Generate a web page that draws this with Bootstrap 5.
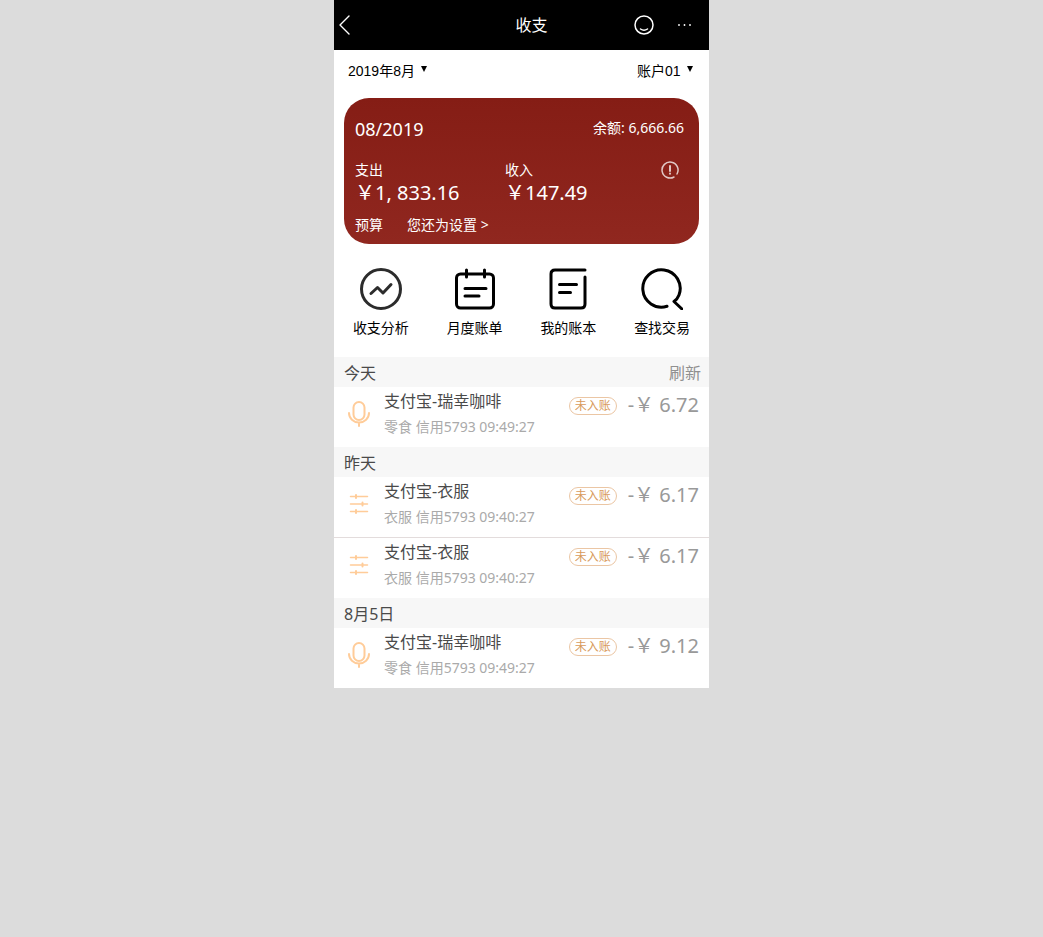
<!DOCTYPE html>
<html lang="zh-CN">
<head>
<meta charset="utf-8">
<meta name="viewport" content="width=device-width, initial-scale=1">
<title>收支</title>
<link href="https://cdn.jsdelivr.net/npm/bootstrap@5.3.0/dist/css/bootstrap.min.css" rel="stylesheet">
<style>
body{background:#dcdcdc;font-family:"Noto Sans","Noto Sans CJK SC",sans-serif;font-size:14px;line-height:20px;color:#000}
a{color:inherit;text-decoration:none}
svg{display:block;fill:none;stroke:currentColor;stroke-linecap:round;stroke-linejoin:round}
.phone{max-width:375px}
.topbar{height:50px}
.topbar h1{font-size:16px;line-height:24px;padding-left:15px}
.back{width:80px}
.actions{width:75px}
.filters{height:48px;padding:10px 16px 16px 14px;font-family:"Liberation Sans","Noto Sans CJK SC",sans-serif}
.pick{appearance:none;border:0;background:none;padding:0;color:inherit;font:inherit;line-height:20px}
.arrow{width:6px;height:6px;margin-left:6px;background:#000;clip-path:polygon(0 0,100% 0,50% 100%)}
.summary{margin:0 10px;border-radius:25px;padding:18px 15px 9px 11px;background:linear-gradient(#851d15,#90271f)}
.period{font-size:18px;line-height:26px}
.balance{line-height:24px}
.flows{padding-top:18px}
.money{font-size:20px;line-height:26px}
.flow{width:150px}
.budget{padding-top:9px}
.tools{padding-top:24px;padding-bottom:19px}
.tools svg{stroke-width:3}
.analysis{color:#2c2c2c}
.day{height:30px;padding:0 8px 0 10px;background:#f7f7f7;color:#4a4a4a}
.day h2,.day button{font-size:16px;line-height:24px;padding-top:1px}
.day button{color:#909090}
.entry{height:60px;padding:2px 10px 0 14px}
.entry + .entry{height:61px;border-top:1px solid #e3dcdc}
.ico{width:36px;padding-top:11px;color:#fc9}
.name{font-size:16px;line-height:25px;color:#4a4a4a}
.meta{line-height:25px;color:#aaa}
.state{border:1px solid #ebc6a4;border-radius:9px;font-size:12px;line-height:16px;padding:0 5px;color:#d89a5b;margin-top:8px;margin-right:11px}
.amount{font-size:20px;line-height:32px;color:#999}
</style>
</head>
<body>
<svg class="d-none" aria-hidden="true">
<symbol id="mic" viewBox="0 0 22 26"><rect x="5.500" y="1" width="11" height="18" rx="5.500" stroke-width="2"/><path d="M1 12a10 9.500 0 0 0 20 0M11 22v3" stroke-width="2"/></symbol>
<symbol id="sliders" viewBox="0 0 22 26"><path d="M2.500 5.500h17M2.500 13h17M2.500 20.500h17" stroke-width="1.500"/><path d="M8 4v3M14.500 11.500v3M8 19v3" stroke-width="2"/></symbol>
</svg>
<main class="phone container-fluid p-0 bg-white">
<header class="topbar bg-black text-white d-flex align-items-center justify-content-between">
<a href="#" class="back" aria-label="返回"><svg width="20" height="22" viewBox="0 0 20 22" stroke-width="1.400"><path d="M15 2 6 11l9 9"/></svg></a>
<h1 class="m-0 fw-normal">收支</h1>
<div class="actions d-flex align-items-center gap-4">
<a href="#" aria-label="客服"><svg width="20" height="20" viewBox="0 0 20 20" stroke-width="1.500"><circle cx="10" cy="10" r="9"/><path d="M6.500 14q3.500 2.500 7 0"/></svg></a>
<a href="#" aria-label="更多"><svg width="14" height="20" viewBox="0 0 14 20" stroke-width="1.800"><path d="M1 10h.01M6.500 10h.01M12 10h.01"/></svg></a>
</div>
</header>
<div class="filters d-flex justify-content-between align-items-center">
<label class="d-flex align-items-center"><select class="pick" aria-label="月份"><option>2019年8月</option></select><span class="arrow mb-1"></span></label>
<label class="d-flex align-items-center"><select class="pick" aria-label="账户"><option>账户01</option></select><span class="arrow mb-1"></span></label>
</div>
<section class="summary text-white">
<div class="d-flex justify-content-between"><span class="period">08/2019</span><span class="balance">余额: 6,666.66</span></div>
<div class="flows d-flex">
<div class="flow"><div>支出</div><div class="money">￥1, 833.16</div></div>
<div class="flow"><div>收入</div><div class="money">￥147.49</div></div>
<a href="#" class="ms-auto me-1 opacity-75" aria-label="说明"><svg width="20" height="20" viewBox="0 0 20 20" stroke-width="1.500"><path d="M14 17A8 8 0 1 1 17 14"/><path d="M10 6v5M10 13.500v.3" stroke-width="2"/></svg></a>
</div>
<div class="budget d-flex gap-4"><span>预算</span><a href="#">您还为设置 &gt;</a></div>
</section>
<nav class="tools row g-0 text-center">
<a href="#" class="col-3"><svg class="analysis mx-auto" width="42" height="42" viewBox="0 0 42 42"><circle cx="21" cy="21" r="19.500"/><path d="M11 25.500l6.500-6 5.500 5.500 8-8.500"/></svg><div class="mt-2">收支分析</div></a>
<a href="#" class="col-3"><svg class="mx-auto" width="42" height="42" viewBox="0 0 42 42"><rect x="2.500" y="6" width="37" height="34" rx="4"/><path d="M12.500 2v7M30.500 2v7M11 20.500h21M11 28h14"/></svg><div class="mt-2">月度账单</div></a>
<a href="#" class="col-3"><svg class="mx-auto" width="42" height="42" viewBox="0 0 42 42"><path d="M38 2H8Q4 2 4 6v30q0 4 4 4h26q4 0 4-4V9M12.500 16.500h17M12.500 24.500h11"/></svg><div class="mt-2">我的账本</div></a>
<a href="#" class="col-3"><svg class="mx-auto" width="42" height="42" viewBox="0 0 42 42"><path d="M26 38.300A18.700 18.700 0 1 1 38 27Q36.500 31 33 33.500L41 41"/></svg><div class="mt-2">查找交易</div></a>
</nav>
<section>
<div class="day d-flex align-items-center justify-content-between"><h2 class="m-0 fw-normal">今天</h2><button class="border-0 bg-transparent px-0 pb-0">刷新</button></div>
<article class="entry d-flex"><div class="ico"><svg width="22" height="28"><use href="#mic"/></svg></div><div class="flex-grow-1"><div class="name">支付宝-瑞幸咖啡</div><div class="meta">零食 信用5793 09:49:27</div></div><div class="d-flex align-items-start"><span class="state">未入账</span><span class="amount">-￥ 6.72</span></div></article>
</section>
<section>
<div class="day d-flex align-items-center"><h2 class="m-0 fw-normal">昨天</h2></div>
<article class="entry d-flex"><div class="ico"><svg width="22" height="28"><use href="#sliders"/></svg></div><div class="flex-grow-1"><div class="name">支付宝-衣服</div><div class="meta">衣服 信用5793 09:40:27</div></div><div class="d-flex align-items-start"><span class="state">未入账</span><span class="amount">-￥ 6.17</span></div></article>
<article class="entry d-flex"><div class="ico"><svg width="22" height="28"><use href="#sliders"/></svg></div><div class="flex-grow-1"><div class="name">支付宝-衣服</div><div class="meta">衣服 信用5793 09:40:27</div></div><div class="d-flex align-items-start"><span class="state">未入账</span><span class="amount">-￥ 6.17</span></div></article>
</section>
<section>
<div class="day d-flex align-items-center"><h2 class="m-0 fw-normal">8月5日</h2></div>
<article class="entry d-flex"><div class="ico"><svg width="22" height="28"><use href="#mic"/></svg></div><div class="flex-grow-1"><div class="name">支付宝-瑞幸咖啡</div><div class="meta">零食 信用5793 09:49:27</div></div><div class="d-flex align-items-start"><span class="state">未入账</span><span class="amount">-￥ 9.12</span></div></article>
</section>
</main>
<script src="https://cdn.jsdelivr.net/npm/bootstrap@5.3.0/dist/js/bootstrap.bundle.min.js"></script>
</body>
</html>
